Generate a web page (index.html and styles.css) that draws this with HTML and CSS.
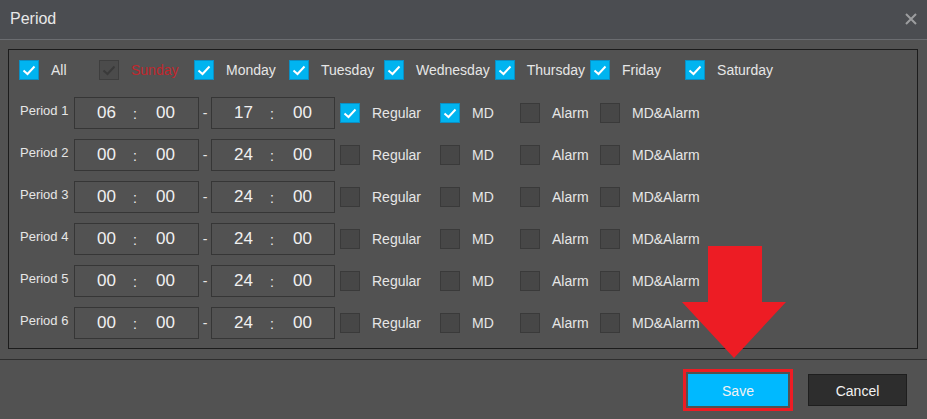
FILE: index.html
```html
<!doctype html>
<html lang="en">
  <head>
    <meta charset="UTF-8" />
    <title>Period</title>
    <link rel="stylesheet" href="styles.css">
  </head>
  <body>
    <div class="dialog">
      <div class="dialog-header">
        <span class="dialog-title">Period</span>
        <svg class="close" width="12" height="12" viewBox="0 0 12 12">
          <path d="M1 1 L11 11 M11 1 L1 11" stroke="#9c9d9f" stroke-width="2" fill="none" />
        </svg>
      </div>

      <div class="dialog-body">
        <div class="panel">
          <div class="days">
            <div class="opt"><span class="cb on"><svg viewBox="0 0 20 20"><path d="M4.5 10.5 L8.5 14 L15.5 6.5" /></svg></span><span class="txt txt-all">All</span></div>
            <div class="opt"><span class="cb off-dis"><svg viewBox="0 0 20 20"><path d="M4.5 10.5 L8.5 14 L15.5 6.5" /></svg></span><span class="txt day sunday">Sunday</span></div>
            <div class="opt"><span class="cb on"><svg viewBox="0 0 20 20"><path d="M4.5 10.5 L8.5 14 L15.5 6.5" /></svg></span><span class="txt day">Monday</span></div>
            <div class="opt"><span class="cb on"><svg viewBox="0 0 20 20"><path d="M4.5 10.5 L8.5 14 L15.5 6.5" /></svg></span><span class="txt day">Tuesday</span></div>
            <div class="opt"><span class="cb on"><svg viewBox="0 0 20 20"><path d="M4.5 10.5 L8.5 14 L15.5 6.5" /></svg></span><span class="txt day">Wednesday</span></div>
            <div class="opt"><span class="cb on"><svg viewBox="0 0 20 20"><path d="M4.5 10.5 L8.5 14 L15.5 6.5" /></svg></span><span class="txt day">Thursday</span></div>
            <div class="opt"><span class="cb on"><svg viewBox="0 0 20 20"><path d="M4.5 10.5 L8.5 14 L15.5 6.5" /></svg></span><span class="txt day">Friday</span></div>
            <div class="opt"><span class="cb on"><svg viewBox="0 0 20 20"><path d="M4.5 10.5 L8.5 14 L15.5 6.5" /></svg></span><span class="txt day">Saturday</span></div>
          </div>

          <div class="periods">
            <div class="period">
              <span class="period-name">Period 1</span>
              <div class="time"><span class="hh">06</span><span class="sep">:</span><span class="mm">00</span></div>
              <span class="dash">-</span>
              <div class="time"><span class="hh">17</span><span class="sep">:</span><span class="mm">00</span></div>
              <div class="flags">
                <div class="opt"><span class="cb on"><svg viewBox="0 0 20 20"><path d="M4.5 10.5 L8.5 14 L15.5 6.5" /></svg></span><span class="txt flag-regular">Regular</span></div>
                <div class="opt"><span class="cb on"><svg viewBox="0 0 20 20"><path d="M4.5 10.5 L8.5 14 L15.5 6.5" /></svg></span><span class="txt flag-short">MD</span></div>
                <div class="opt"><span class="cb"></span><span class="txt flag-short">Alarm</span></div>
                <div class="opt"><span class="cb"></span><span class="txt">MD&amp;Alarm</span></div>
              </div>
            </div>

            <div class="period">
              <span class="period-name">Period 2</span>
              <div class="time"><span class="hh">00</span><span class="sep">:</span><span class="mm">00</span></div>
              <span class="dash">-</span>
              <div class="time"><span class="hh">24</span><span class="sep">:</span><span class="mm">00</span></div>
              <div class="flags">
                <div class="opt"><span class="cb"></span><span class="txt flag-regular">Regular</span></div>
                <div class="opt"><span class="cb"></span><span class="txt flag-short">MD</span></div>
                <div class="opt"><span class="cb"></span><span class="txt flag-short">Alarm</span></div>
                <div class="opt"><span class="cb"></span><span class="txt">MD&amp;Alarm</span></div>
              </div>
            </div>

            <div class="period">
              <span class="period-name">Period 3</span>
              <div class="time"><span class="hh">00</span><span class="sep">:</span><span class="mm">00</span></div>
              <span class="dash">-</span>
              <div class="time"><span class="hh">24</span><span class="sep">:</span><span class="mm">00</span></div>
              <div class="flags">
                <div class="opt"><span class="cb"></span><span class="txt flag-regular">Regular</span></div>
                <div class="opt"><span class="cb"></span><span class="txt flag-short">MD</span></div>
                <div class="opt"><span class="cb"></span><span class="txt flag-short">Alarm</span></div>
                <div class="opt"><span class="cb"></span><span class="txt">MD&amp;Alarm</span></div>
              </div>
            </div>

            <div class="period">
              <span class="period-name">Period 4</span>
              <div class="time"><span class="hh">00</span><span class="sep">:</span><span class="mm">00</span></div>
              <span class="dash">-</span>
              <div class="time"><span class="hh">24</span><span class="sep">:</span><span class="mm">00</span></div>
              <div class="flags">
                <div class="opt"><span class="cb"></span><span class="txt flag-regular">Regular</span></div>
                <div class="opt"><span class="cb"></span><span class="txt flag-short">MD</span></div>
                <div class="opt"><span class="cb"></span><span class="txt flag-short">Alarm</span></div>
                <div class="opt"><span class="cb"></span><span class="txt">MD&amp;Alarm</span></div>
              </div>
            </div>

            <div class="period">
              <span class="period-name">Period 5</span>
              <div class="time"><span class="hh">00</span><span class="sep">:</span><span class="mm">00</span></div>
              <span class="dash">-</span>
              <div class="time"><span class="hh">24</span><span class="sep">:</span><span class="mm">00</span></div>
              <div class="flags">
                <div class="opt"><span class="cb"></span><span class="txt flag-regular">Regular</span></div>
                <div class="opt"><span class="cb"></span><span class="txt flag-short">MD</span></div>
                <div class="opt"><span class="cb"></span><span class="txt flag-short">Alarm</span></div>
                <div class="opt"><span class="cb"></span><span class="txt">MD&amp;Alarm</span></div>
              </div>
            </div>

            <div class="period">
              <span class="period-name">Period 6</span>
              <div class="time"><span class="hh">00</span><span class="sep">:</span><span class="mm">00</span></div>
              <span class="dash">-</span>
              <div class="time"><span class="hh">24</span><span class="sep">:</span><span class="mm">00</span></div>
              <div class="flags">
                <div class="opt"><span class="cb"></span><span class="txt flag-regular">Regular</span></div>
                <div class="opt"><span class="cb"></span><span class="txt flag-short">MD</span></div>
                <div class="opt"><span class="cb"></span><span class="txt flag-short">Alarm</span></div>
                <div class="opt"><span class="cb"></span><span class="txt">MD&amp;Alarm</span></div>
              </div>
            </div>
          </div>
        </div>
      </div>

      <div class="dialog-footer">
        <button class="btn btn-save">Save</button>
        <button class="btn btn-cancel">Cancel</button>
      </div>

      <!-- annotation arrow pointing at Save -->
      <svg class="arrow" width="104" height="114" viewBox="0 0 104 114">
        <polygon points="26,1 80,1 80,57 104,57 52,113 0,57 26,57" fill="#ed1c24" />
      </svg>
    </div>
  </body>
</html>
```

FILE: styles.css
```css
* {
  margin: 0;
  padding: 0;
  box-sizing: border-box;
}

body {
  font-family: "Liberation Sans", Arial, sans-serif;
  font-size: 14px;
  color: #e6e6e6;
  background: #525252;
  width: 927px;
  height: 419px;
  overflow: hidden;
}

.dialog {
  position: relative;
  width: 927px;
  height: 419px;
  background: #525252;
}

.dialog-header {
  height: 40px;
  background: #4b4d51;
  border-bottom: 1px solid #6a6c70;
  display: flex;
  align-items: center;
  justify-content: space-between;
  padding: 0 10px 1px 10px;
}

.dialog-title {
  font-size: 16px;
  color: #e8e8e8;
}

.close {
  display: block;
}

.dialog-body {
  padding: 9px 9px 10px 8px;
  border-bottom: 1px solid #2e2e2e;
}

.panel {
  height: 300px;
  border: 1px solid #1c1c1c;
  padding: 10px 10px 0 10px;
}

.opt {
  display: flex;
  align-items: center;
}

.cb {
  width: 20px;
  height: 20px;
  flex: none;
  background: #474747;
  border: 1px solid #3a3a3a;
  margin-right: 12px;
  display: flex;
  align-items: center;
  justify-content: center;
}

.cb svg {
  width: 20px;
  height: 20px;
  display: block;
  margin: -1px;
}

.cb svg path {
  fill: none;
  stroke: #fff;
  stroke-width: 2;
}

.cb.on {
  background: #00b4f0;
  border-color: #0a8fc4;
}

.cb.off-dis {
  background: #4b4b4b;
  border-color: #3e3e3e;
}

.cb.off-dis svg path {
  stroke: #3a3a3a;
}

.txt {
  white-space: nowrap;
  line-height: 20px;
}

.days {
  display: flex;
  align-items: center;
  height: 20px;
}

.txt-all {
  width: 48px;
}

.day {
  min-width: 58px;
  margin-right: 5px;
}

.sunday {
  color: #c1272d;
}

.periods {
  margin-top: 17px;
  display: flex;
  flex-direction: column;
  gap: 10px;
}

.period {
  display: flex;
  align-items: center;
  height: 32px;
}

.period-name {
  width: 55px;
  font-size: 13px;
  align-self: flex-start;
  line-height: 28px;
  padding-left: 1px;
}

.time {
  width: 125px;
  height: 32px;
  border: 1px solid #363636;
  display: flex;
  align-items: center;
  font-size: 17px;
  color: #f0f0f0;
  padding-left: 7px;
}

.time + .dash + .time {
  width: 124px;
}

.hh {
  width: 49px;
  text-align: center;
}

.sep {
  width: 8px;
  text-align: center;
  font-size: 14px;
  padding-top: 1px;
}

.mm {
  width: 53px;
  text-align: center;
}

.dash {
  width: 12px;
  text-align: center;
  line-height: 20px;
}

.flags {
  display: flex;
  align-items: center;
  margin-left: 5px;
}

.flag-regular {
  width: 68px;
}

.flag-short {
  width: 48px;
}

.dialog-footer {
  display: flex;
  justify-content: flex-end;
  gap: 20px;
  padding: 14px 20px 0 0;
}

.btn {
  height: 32px;
  font-family: "Liberation Sans", Arial, sans-serif;
  font-size: 14px;
  color: #f2f2f2;
  border: none;
  cursor: pointer;
  padding-top: 1px;
}

.btn-save {
  width: 100px;
  background: #00b9ff;
  outline: 3px solid #ed1c24;
  outline-offset: 2px;
}

.btn-cancel {
  width: 99px;
  background: #2d2d2d;
  border: 1px solid #1e1e1e;
}

.arrow {
  position: absolute;
  left: 682px;
  top: 245px;
}
```
